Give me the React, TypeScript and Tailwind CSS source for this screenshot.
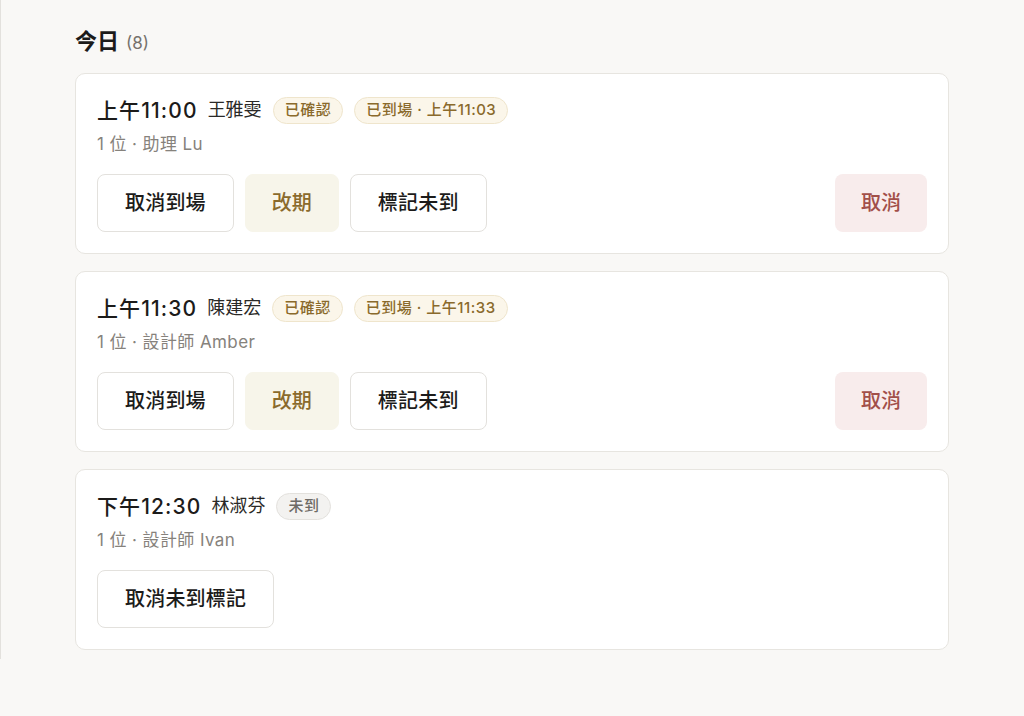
import React from 'react';

type Badge = { label: string; tone: 'gold' | 'gray' };

interface Booking {
  time: string;
  name: string;
  detail: string;
  badges: Badge[];
  actions: { label: string; tone: 'plain' | 'gold' }[];
  cancel?: boolean;
}

const bookings: Booking[] = [
  {
    time: '上午11:00',
    name: '王雅雯',
    detail: '1 位 · 助理 Lu',
    badges: [
      { label: '已確認', tone: 'gold' },
      { label: '已到場 · 上午11:03', tone: 'gold' },
    ],
    actions: [
      { label: '取消到場', tone: 'plain' },
      { label: '改期', tone: 'gold' },
      { label: '標記未到', tone: 'plain' },
    ],
    cancel: true,
  },
  {
    time: '上午11:30',
    name: '陳建宏',
    detail: '1 位 · 設計師 Amber',
    badges: [
      { label: '已確認', tone: 'gold' },
      { label: '已到場 · 上午11:33', tone: 'gold' },
    ],
    actions: [
      { label: '取消到場', tone: 'plain' },
      { label: '改期', tone: 'gold' },
      { label: '標記未到', tone: 'plain' },
    ],
    cancel: true,
  },
  {
    time: '下午12:30',
    name: '林淑芬',
    detail: '1 位 · 設計師 Ivan',
    badges: [{ label: '未到', tone: 'gray' }],
    actions: [{ label: '取消未到標記', tone: 'plain' }],
  },
];

function StatusBadge({ badge }: { badge: Badge }) {
  const tone =
    badge.tone === 'gold'
      ? 'bg-[#fbf6ea] border-[#efe5cc] text-[#8a6a2c]'
      : 'bg-[#f3f2f0] border-[#e3e1dd] text-[#6e6b66]';
  return (
    <span className={`inline-flex items-center h-[27px] px-[11px] rounded-full border text-[15px] font-medium tracking-[0.5px] ${tone}`}>
      {badge.label}
    </span>
  );
}

function BookingCard({ booking }: { booking: Booking }) {
  return (
    <div className="bg-white border border-[#e7e5e0] rounded-[10px] px-[21px] pt-[21px] pb-[21px]">
      <div className="flex items-center h-[30px]">
        <span className="text-[21px] font-medium text-[#1c1b1a] leading-none tracking-[1.1px]">{booking.time}</span>
        <span className="ml-[10px] text-[18px] text-[#2a2927] leading-none">{booking.name}</span>
        <div className="ml-[11px] flex items-center gap-[11px]">
          {booking.badges.map((b) => (
            <StatusBadge key={b.label} badge={b} />
          ))}
        </div>
      </div>
      <div className="mt-[7px] text-[17px] text-[#86827c] leading-[24px] tracking-[0.4px]">{booking.detail}</div>
      <div className="mt-[18px] flex items-center">
        <div className="flex items-center gap-[11px]">
          {booking.actions.map((a) =>
            a.tone === 'gold' ? (
              <button
                key={a.label}
                className="h-[58px] px-[26px] rounded-[8px] border border-[#f7f5ea] bg-[#f7f5ea] text-[#8a6a2c] text-[20px] font-medium"
              >
                {a.label}
              </button>
            ) : (
              <button
                key={a.label}
                className="h-[58px] px-[27px] rounded-[8px] border border-[#e3e1dd] bg-white text-[#1c1b1a] text-[20px] font-medium tracking-[0.2px]"
              >
                {a.label}
              </button>
            )
          )}
        </div>
        {booking.cancel && (
          <button className="ml-auto h-[58px] px-[26px] rounded-[8px] bg-[#f8ecec] text-[#a24f49] text-[20px] font-medium">
            取消
          </button>
        )}
      </div>
    </div>
  );
}

export default function App() {
  return (
    <div
      className="w-[1024px] h-[716px] bg-[#f9f8f6] overflow-hidden"
      style={{ fontFamily: '"Inter", "Noto Sans CJK TC", sans-serif' }}
    >
      <div className="border-l border-[#e3e1dd] pl-[74px] pr-[75px] pt-[25px] pb-[9px]">
        <div className="flex items-baseline h-[30px]">
          <span className="text-[22px] font-bold text-[#1c1b1a]">今日</span>
          <span className="ml-[7px] text-[17px] text-[#76726c]">(8)</span>
        </div>
        <div className="mt-[18px] flex flex-col gap-[17px]">
          {bookings.map((b) => (
            <BookingCard key={b.time} booking={b} />
          ))}
        </div>
      </div>
    </div>
  );
}
